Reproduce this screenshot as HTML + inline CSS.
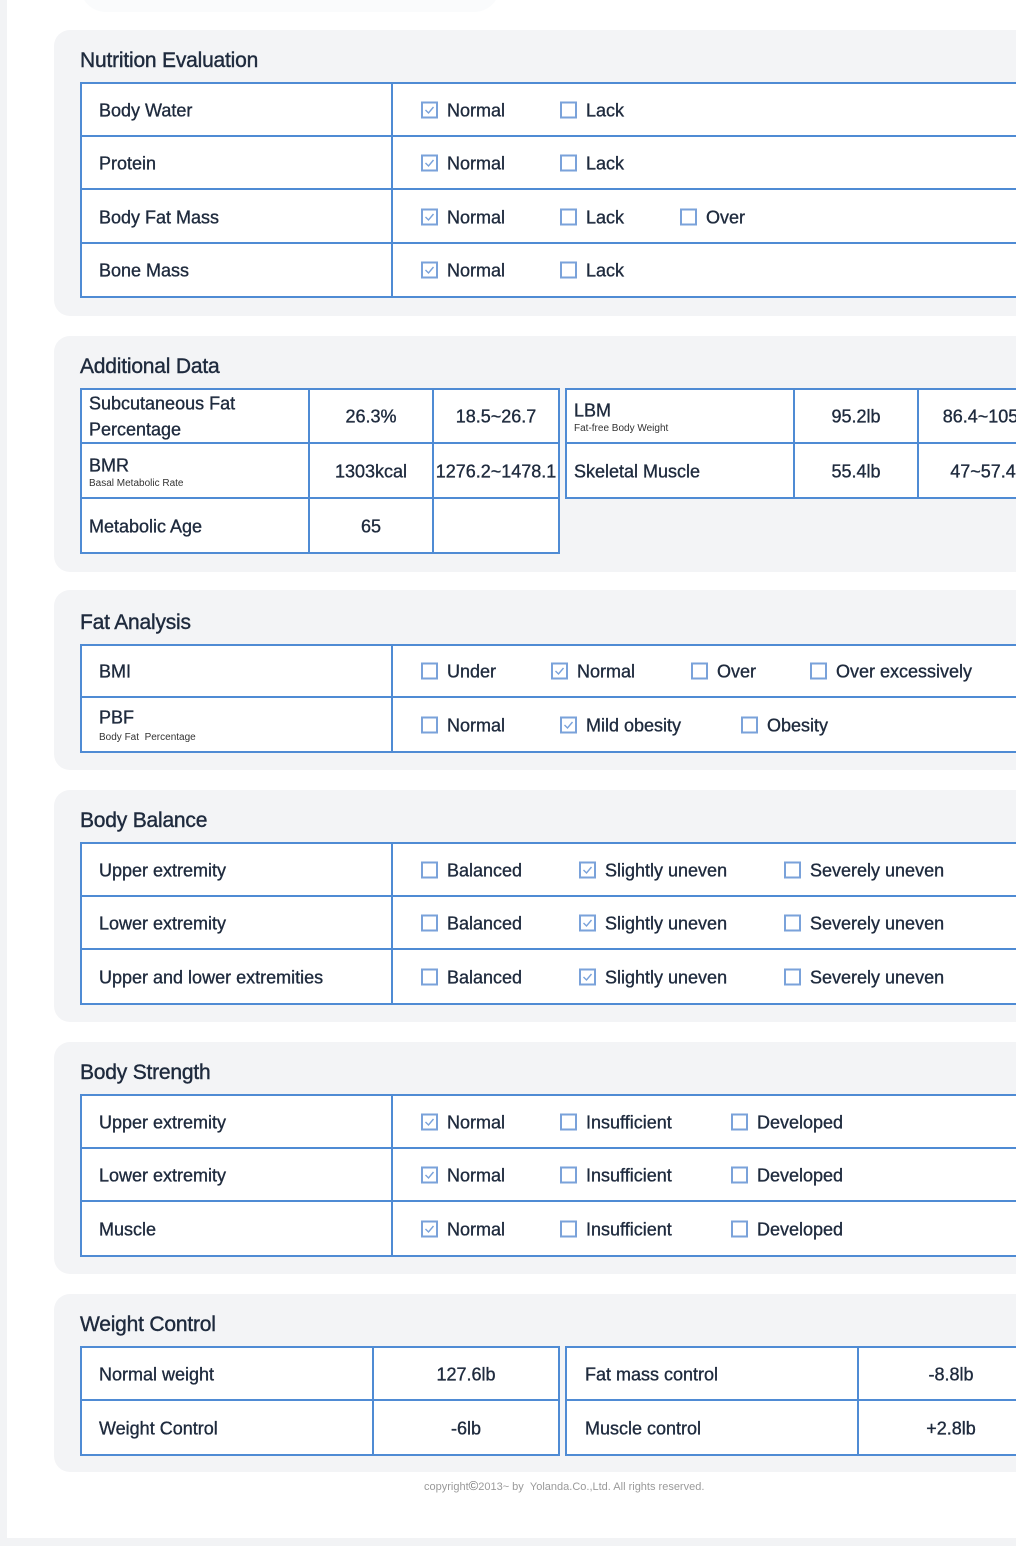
<!DOCTYPE html>
<html><head><meta charset="utf-8"><style>
*{box-sizing:border-box;margin:0;padding:0}
html,body{width:1016px;height:1546px;overflow:hidden;background:#fff;font-family:"Liberation Sans",Arial,sans-serif;color:#1e2a3d}
body{position:relative}
.lstrip{position:absolute;left:0;top:0;width:7px;height:1546px;background:#f2f3f5}
.bstrip{position:absolute;left:0;top:1538px;width:1016px;height:8px;background:#f2f3f5}
.topblob{position:absolute;left:80px;top:-40px;width:420px;height:52px;border-radius:30px;background:#fafbfc}
.sec{position:absolute;left:54px;width:1000px;background:#f3f4f6;border-radius:16px}
.title{position:absolute;left:80px;font-size:21px;letter-spacing:-0.2px;-webkit-text-stroke:0.4px #1e2a3d}
.b{position:absolute;border:2px solid #4f8bd4;background:#fff}
.h{position:absolute;height:2px;background:#4f8bd4}
.v{position:absolute;width:2px;background:#4f8bd4}
.t{position:absolute;font-size:18px;white-space:nowrap;transform:translateY(-45%);-webkit-text-stroke:0.35px #1e2a3d}
.c{text-align:center;transform:translate(-50%,-45%)}
.s{font-size:10px;color:#333;-webkit-text-stroke:0}
.cb{position:absolute;width:17px;height:17px;border:2px solid #7aa2da;background:#fff;transform:translateY(-50%)}
.cb svg{position:absolute;left:1px;top:1px}
.foot{position:absolute;left:424px;top:1478px;font-size:11px;color:#9a9a9a}
</style></head><body>
<div class="lstrip"></div><div class="bstrip"></div><div class="topblob"></div>

<div class="sec" style="top:30px;height:286px"></div>
<div class="title" style="top:49px">Nutrition Evaluation</div>
<div class="b" style="left:80px;top:82px;width:960px;height:216px"></div>
<div class="v" style="left:391px;top:82px;height:216px"></div>
<div class="h" style="left:80px;top:135px;width:940px"></div>
<div class="h" style="left:80px;top:188px;width:940px"></div>
<div class="h" style="left:80px;top:242px;width:940px"></div>

<div class="sec" style="top:336px;height:236px"></div>
<div class="title" style="top:355px">Additional Data</div>
<div class="b" style="left:80px;top:388px;width:480px;height:166px"></div>
<div class="v" style="left:308px;top:388px;height:166px"></div>
<div class="v" style="left:432px;top:388px;height:166px"></div>
<div class="h" style="left:80px;top:442px;width:480px"></div>
<div class="h" style="left:80px;top:497px;width:480px"></div>
<div class="b" style="left:565px;top:388px;width:500px;height:111px"></div>
<div class="v" style="left:793px;top:388px;height:111px"></div>
<div class="v" style="left:917px;top:388px;height:111px"></div>
<div class="h" style="left:565px;top:442px;width:480px"></div>

<div class="sec" style="top:590px;height:180px"></div>
<div class="title" style="top:611px">Fat Analysis</div>
<div class="b" style="left:80px;top:644px;width:960px;height:109px"></div>
<div class="v" style="left:391px;top:644px;height:109px"></div>
<div class="h" style="left:80px;top:696px;width:940px"></div>

<div class="sec" style="top:790px;height:232px"></div>
<div class="title" style="top:809px">Body Balance</div>
<div class="b" style="left:80px;top:842px;width:960px;height:163px"></div>
<div class="v" style="left:391px;top:842px;height:163px"></div>
<div class="h" style="left:80px;top:895px;width:940px"></div>
<div class="h" style="left:80px;top:948px;width:940px"></div>

<div class="sec" style="top:1042px;height:232px"></div>
<div class="title" style="top:1061px">Body Strength</div>
<div class="b" style="left:80px;top:1094px;width:960px;height:163px"></div>
<div class="v" style="left:391px;top:1094px;height:163px"></div>
<div class="h" style="left:80px;top:1147px;width:940px"></div>
<div class="h" style="left:80px;top:1200px;width:940px"></div>

<div class="sec" style="top:1294px;height:178px"></div>
<div class="title" style="top:1313px">Weight Control</div>
<div class="b" style="left:80px;top:1346px;width:480px;height:110px"></div>
<div class="v" style="left:372px;top:1346px;height:110px"></div>
<div class="h" style="left:80px;top:1399px;width:480px"></div>
<div class="b" style="left:565px;top:1346px;width:500px;height:110px"></div>
<div class="v" style="left:857px;top:1346px;height:110px"></div>
<div class="h" style="left:565px;top:1399px;width:480px"></div>

<div id="txt"></div>
<div class="foot">copyright<span style="font-size:13px;color:#777">©</span>2013~ by &nbsp;Yolanda.Co.,Ltd. All rights reserved.</div>

<script>
var h='';
function t(x,y,s,cls){h+='<div class="t '+(cls||'')+'" style="left:'+x+'px;top:'+y+'px">'+s+'</div>';}
function cb(x,y,on){h+='<div class="cb" style="left:'+x+'px;top:'+y+'px">'+(on?'<svg width="11" height="11" viewBox="0 0 11 11"><path d="M1.5 5.5 L4.5 8.5 L9.5 2.5" fill="none" stroke="#7aa2da" stroke-width="1.4"/></svg>':'')+'</div>';}
function row(label,y,opts){t(99,y,label);opts.forEach(function(o){cb(o[0],y,o[2]);t(o[0]+26,y,o[1]);});}
row('Body Water',110,[[421,'Normal',1],[560,'Lack',0]]);
row('Protein',163,[[421,'Normal',1],[560,'Lack',0]]);
row('Body Fat Mass',217,[[421,'Normal',1],[560,'Lack',0],[680,'Over',0]]);
row('Bone Mass',270,[[421,'Normal',1],[560,'Lack',0]]);
t(89,403,'Subcutaneous Fat');t(89,429,'Percentage');
t(371,416,'26.3%','c');t(496,416,'18.5~26.7','c');
t(89,465,'BMR');t(89,483,'Basal Metabolic Rate','s');
t(371,471,'1303kcal','c');t(496,471,'1276.2~1478.1','c');
t(89,526,'Metabolic Age');t(371,526,'65','c');
t(574,410,'LBM');t(574,428,'Fat-free Body Weight','s');
t(856,416,'95.2lb','c');t(983,416,'86.4~105.','c');
t(574,471,'Skeletal Muscle');t(856,471,'55.4lb','c');t(983,471,'47~57.4','c');
row('BMI',671,[[421,'Under',0],[551,'Normal',1],[691,'Over',0],[810,'Over excessively',0]]);
row('PBF',717,[]);t(99,737,'Body Fat &nbsp;Percentage','s');
[[421,'Normal',0],[560,'Mild obesity',1],[741,'Obesity',0]].forEach(function(o){cb(o[0],725,o[2]);t(o[0]+26,725,o[1]);});
var bal=function(){return [[421,'Balanced',0],[579,'Slightly uneven',1],[784,'Severely uneven',0]];};
row('Upper extremity',870,bal());row('Lower extremity',923,bal());row('Upper and lower extremities',977,bal());
var st=[[421,'Normal',1],[560,'Insufficient',0],[731,'Developed',0]];
row('Upper extremity',1122,st);row('Lower extremity',1175,st);row('Muscle',1229,st);
t(99,1374,'Normal weight');t(466,1374,'127.6lb','c');
t(99,1428,'Weight Control');t(466,1428,'-6lb','c');
t(585,1374,'Fat mass control');t(951,1374,'-8.8lb','c');
t(585,1428,'Muscle control');t(951,1428,'+2.8lb','c');
document.getElementById('txt').innerHTML=h;
</script>
</body></html>
